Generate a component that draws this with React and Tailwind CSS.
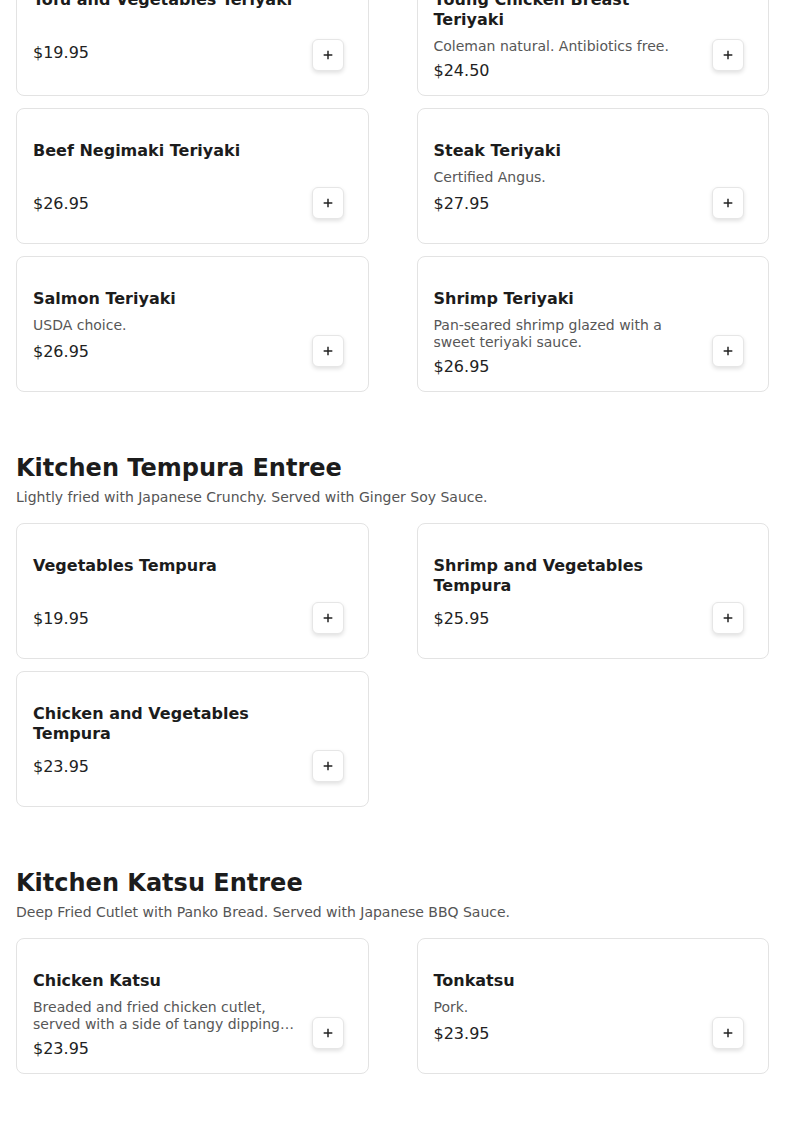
import React from "react";

const sections = [
  {
    title: null,
    items: [
      { name: "Tofu and Vegetables Teriyaki", price: "$19.95" },
      { name: "Young Chicken Breast Teriyaki", desc: "Coleman natural. Antibiotics free.", price: "$24.50" },
      { name: "Beef Negimaki Teriyaki", price: "$26.95" },
      { name: "Steak Teriyaki", desc: "Certified Angus.", price: "$27.95" },
      { name: "Salmon Teriyaki", desc: "USDA choice.", price: "$26.95" },
      { name: "Shrimp Teriyaki", desc: "Pan-seared shrimp glazed with a sweet teriyaki sauce.", price: "$26.95" },
    ],
  },
  {
    title: "Kitchen Tempura Entree",
    subtitle: "Lightly fried with Japanese Crunchy. Served with Ginger Soy Sauce.",
    items: [
      { name: "Vegetables Tempura", price: "$19.95" },
      { name: "Shrimp and Vegetables Tempura", price: "$25.95" },
      { name: "Chicken and Vegetables Tempura", price: "$23.95" },
    ],
  },
  {
    title: "Kitchen Katsu Entree",
    subtitle: "Deep Fried Cutlet with Panko Bread. Served with Japanese BBQ Sauce.",
    items: [
      {
        name: "Chicken Katsu",
        desc: "Breaded and fried chicken cutlet, served with a side of tangy dipping sauce.",
        price: "$23.95",
      },
      { name: "Tonkatsu", desc: "Pork.", price: "$23.95" },
    ],
  },
];

function PlusIcon() {
  return (
    <svg width="16" height="16" viewBox="0 0 24 24" fill="none" stroke="#222" strokeWidth="2.2" strokeLinecap="butt">
      <path d="M12 5.5v13M5.5 12h13" />
    </svg>
  );
}

function Card({ item }) {
  return (
    <div className="flex min-h-[136px] rounded-lg border border-[#e3e3e3] bg-white pt-8 pb-3 pl-4 pr-6">
      <div className="flex min-w-0 flex-1 flex-col pr-4">
        <div className="min-h-[47px]">
          <h3 className="text-base font-bold leading-5 text-[#1c1c1c]">{item.name}</h3>
          {item.desc && (
            <p className="mt-2 line-clamp-2 text-sm leading-[17px] text-[#575757]">{item.desc}</p>
          )}
        </div>
        <div className="mt-1 text-base leading-6 text-[#222]">{item.price}</div>
      </div>
      <button className="mb-3 flex h-8 w-8 shrink-0 items-center justify-center self-end rounded-md border border-[#e6e6e6] bg-white shadow-[0_2px_4px_rgba(0,0,0,0.12)]">
        <PlusIcon />
      </button>
    </div>
  );
}

export default function App() {
  return (
    <div className="min-h-screen overflow-hidden bg-white px-4 pb-10 font-['DejaVu_Sans',sans-serif]">
      <div className="mt-[-43px] flex flex-col gap-[60px]">
        {sections.map((s, i) => (
          <section key={i}>
            {s.title && (
              <div className="mb-4">
                <h2 className="text-2xl font-bold leading-8 text-[#1c1c1c]">{s.title}</h2>
                <p className="mt-[3px] text-sm leading-5 text-[#555]">{s.subtitle}</p>
              </div>
            )}
            <div className="grid grid-cols-2 gap-x-12 gap-y-3">
              {s.items.map((it) => (
                <Card key={it.name} item={it} />
              ))}
            </div>
          </section>
        ))}
      </div>
    </div>
  );
}
